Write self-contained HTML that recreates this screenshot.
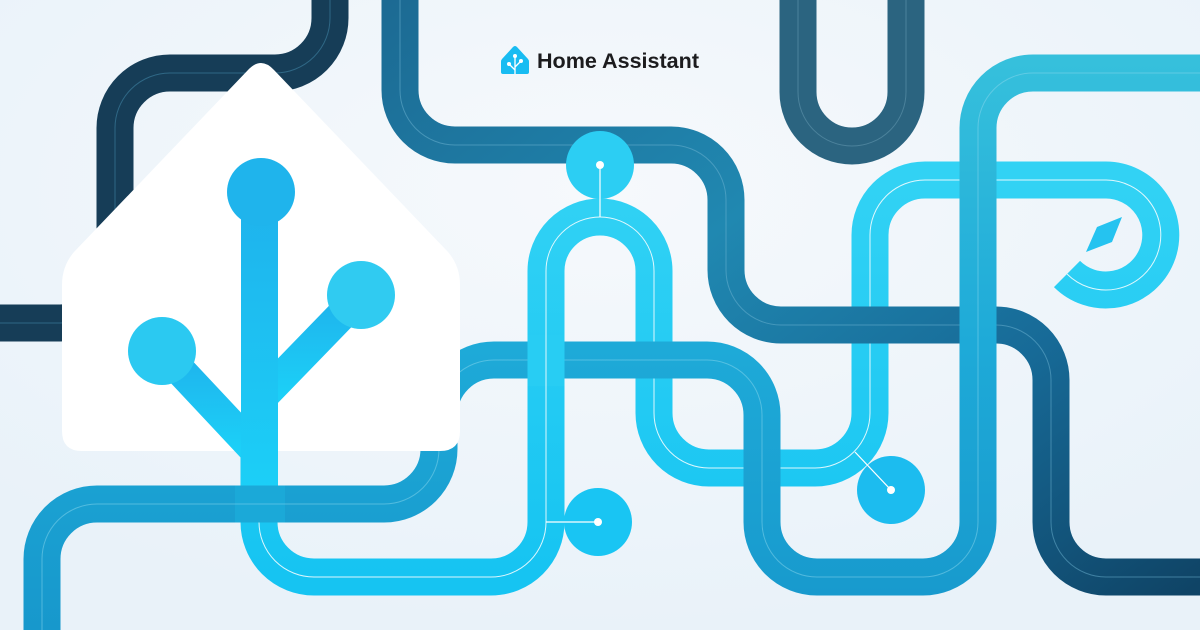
<!DOCTYPE html>
<html><head><meta charset="utf-8"><style>
html,body{margin:0;padding:0;width:1200px;height:630px;overflow:hidden;background:#edf3f9}
svg{display:block}
</style></head><body>
<svg width="1200" height="630" viewBox="0 0 1200 630" xmlns="http://www.w3.org/2000/svg">
<defs>
<radialGradient id="bg" cx="0.5" cy="0.3" r="0.7">
<stop offset="0" stop-color="#f6f9fc"/><stop offset="1" stop-color="#e9f2f9"/>
</radialGradient>
<linearGradient id="gB" x1="0" y1="0" x2="1" y2="1">
<stop offset="0" stop-color="#1c6a93"/><stop offset="0.4" stop-color="#2088b1"/><stop offset="0.7" stop-color="#176a97"/><stop offset="1" stop-color="#0f4466"/>
</linearGradient>
<linearGradient id="gE" gradientUnits="userSpaceOnUse" x1="0" y1="60" x2="0" y2="630">
<stop offset="0" stop-color="#36c0dc"/><stop offset="0.5" stop-color="#1eaad8"/><stop offset="1" stop-color="#1798cc"/>
</linearGradient>
<linearGradient id="gF" x1="0" y1="0" x2="0" y2="1">
<stop offset="0" stop-color="#32d2f4"/><stop offset="1" stop-color="#16c4f2"/>
</linearGradient>
<linearGradient id="gT" x1="0" y1="0" x2="0" y2="1">
<stop offset="0" stop-color="#1fb2ec"/><stop offset="1" stop-color="#1ccff7"/>
</linearGradient>
</defs>
<rect width="1200" height="630" fill="url(#bg)"/>
<g fill="none" stroke-linecap="butt">
<path d="M330,-10 V18 A55 55 0 0 1 275 73 H170 A55 55 0 0 0 115 128 V268 A55 55 0 0 1 60 323 H-10" stroke="#163d57" stroke-width="37"/>
<path d="M330,-10 V18 A55 55 0 0 1 275 73 H170 A55 55 0 0 0 115 128 V268 A55 55 0 0 1 60 323 H-10" stroke="#3a7a9a" stroke-width="1" opacity="0.7"/>
<path d="M798,-10 V92 A54 54 0 0 0 906 92 V-10" stroke="#2b6480" stroke-width="37"/>
<path d="M798,-10 V92 A54 54 0 0 0 906 92 V-10" stroke="#5a8ea6" stroke-width="1" opacity="0.7"/>
<path d="M259,200 V522 A55 55 0 0 0 314 577 H491 A55 55 0 0 0 546 522 V271 A54 54 0 0 1 654 271 V413 A55 55 0 0 0 709 468 H815 A55 55 0 0 0 870 413 V235 A55 55 0 0 1 925 180 H1106 A55 55 0 1 1 1067 274" stroke="url(#gF)" stroke-width="37"/>
<path d="M259,487 V522 A55 55 0 0 0 314 577 H491 A55 55 0 0 0 546 522 V271 A54 54 0 0 1 654 271 V413 A55 55 0 0 0 709 468 H815 A55 55 0 0 0 870 413 V235 A55 55 0 0 1 925 180 H1106 A55 55 0 1 1 1067 274" stroke="#ffffff" stroke-width="1" opacity="0.85"/>
<path d="M400,-10 V90 A55 55 0 0 0 455 145 H671 A55 55 0 0 1 726 200 V270 A55 55 0 0 0 781 325 H996 A55 55 0 0 1 1051 380 V522 A55 55 0 0 0 1106 577 H1210" stroke="url(#gB)" stroke-width="37"/>
<path d="M400,-10 V90 A55 55 0 0 0 455 145 H671 A55 55 0 0 1 726 200 V270 A55 55 0 0 0 781 325 H996 A55 55 0 0 1 1051 380 V522 A55 55 0 0 0 1106 577 H1210" stroke="#6fb6d4" stroke-width="1" opacity="0.5"/>
<path d="M42,640 V559 A55 55 0 0 1 97 504 H384 A55 55 0 0 0 439 449 V415 A55 55 0 0 1 494 360 H707 A55 55 0 0 1 762 415 V522 A55 55 0 0 0 817 577 H923 A55 55 0 0 0 978 522 V128 A55 55 0 0 1 1033 73 H1210" stroke="url(#gE)" stroke-width="37"/>
<path d="M42,640 V559 A55 55 0 0 1 97 504 H384 A55 55 0 0 0 439 449 V415 A55 55 0 0 1 494 360 H707 A55 55 0 0 1 762 415 V522 A55 55 0 0 0 817 577 H923 A55 55 0 0 0 978 522 V128 A55 55 0 0 1 1033 73 H1210" stroke="#8ad8ee" stroke-width="1" opacity="0.5"/>
<path d="M546,335 V386" stroke="#28cdf3" stroke-width="37"/>
<path d="M546,335 V386" stroke="#fff" stroke-width="1" opacity="0.85"/>
</g>
<path d="M248,70 Q261,56 274,70 L448,252 Q460,266 460,285 V431 Q460,451 440,451 H82 Q62,451 62,431 V285 Q62,266 74,252 Z" fill="#ffffff"/>
<g stroke="url(#gT)" stroke-width="31" fill="none">
<line x1="162" y1="351" x2="252" y2="447"/>
<line x1="361" y1="295" x2="266" y2="393"/>
</g>
<rect x="241" y="195" width="37" height="292" fill="url(#gT)"/>
<circle cx="261" cy="192" r="34" fill="#1fb4ec"/>
<circle cx="162" cy="351" r="34" fill="#2bc9f1"/>
<circle cx="361" cy="295" r="34" fill="#30cbf1"/>
<path d="M235,504 H285" stroke="#1ba9d8" stroke-width="37"/>
<path d="M235,504 H285" stroke="#8ad8ee" stroke-width="1" opacity="0.5"/>
<circle cx="600" cy="165" r="34" fill="#2ccef3"/>
<line x1="600" y1="165" x2="600" y2="217" stroke="#fff" stroke-width="1.2"/>
<circle cx="600" cy="165" r="4" fill="#fff"/>
<circle cx="598" cy="522" r="34" fill="#19c5f3"/>
<line x1="546" y1="522" x2="598" y2="522" stroke="#fff" stroke-width="1.2"/>
<circle cx="598" cy="522" r="4" fill="#fff"/>
<circle cx="891" cy="490" r="34" fill="#1cbcef"/>
<line x1="855" y1="452" x2="891" y2="490" stroke="#fff" stroke-width="1.2"/>
<circle cx="891" cy="490" r="4" fill="#fff"/>
<polygon points="1122,217 1097,227 1086,252 1112,242" fill="#25c3f0"/>
<path d="M513,47 Q515,45 517,47 L528,59 Q529,60 529,62 V72 Q529,74 527,74 H503 Q501,74 501,72 V62 Q501,60 502,59 Z" fill="#18bcf2"/>
<g stroke="#fff" stroke-width="1.3" fill="none"><line x1="515" y1="56" x2="515" y2="74"/><line x1="509" y1="64" x2="515" y2="70"/><line x1="521" y1="61" x2="515" y2="67"/></g>
<circle cx="515" cy="56" r="2" fill="#fff"/><circle cx="509" cy="64" r="2" fill="#fff"/><circle cx="521" cy="61" r="2" fill="#fff"/>
<text x="537" y="68" font-family="Liberation Sans, sans-serif" font-weight="bold" font-size="21" fill="#1c1c1e" textLength="162" lengthAdjust="spacingAndGlyphs">Home Assistant</text>
</svg>
</body></html>
